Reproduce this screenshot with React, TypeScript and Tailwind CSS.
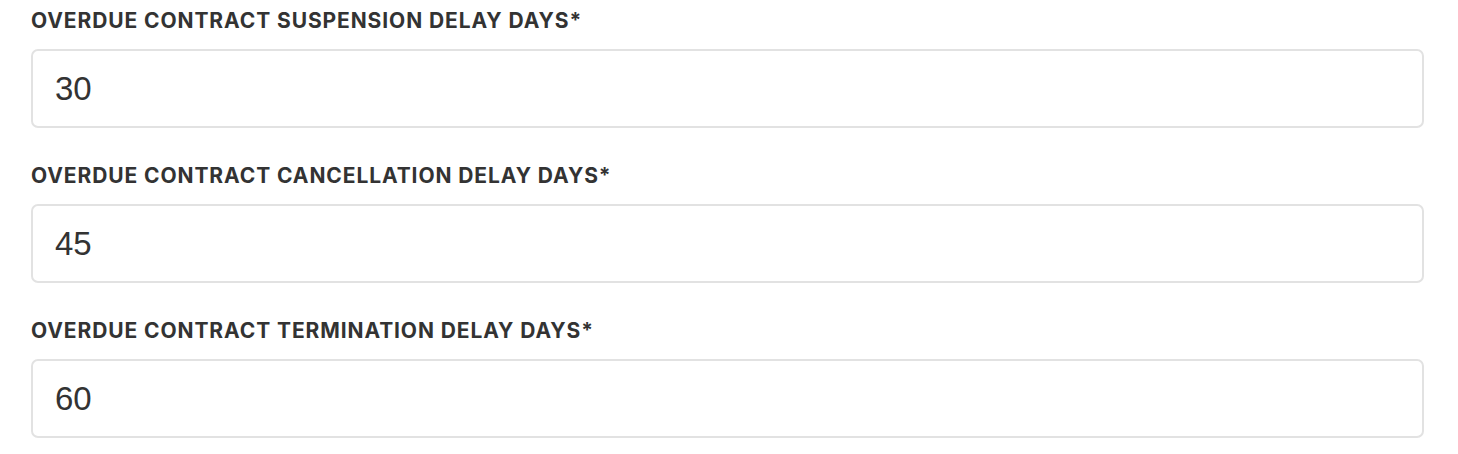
const fields = [
  { id: 'suspension', label: 'OVERDUE CONTRACT SUSPENSION DELAY DAYS*', value: '30' },
  { id: 'cancellation', label: 'OVERDUE CONTRACT CANCELLATION DELAY DAYS*', value: '45' },
  { id: 'termination', label: 'OVERDUE CONTRACT TERMINATION DELAY DAYS*', value: '60' },
]

export default function App() {
  return (
    <div className="min-h-screen bg-white pl-[31px] pr-[34px] pt-[7px]">
      <div className="flex flex-col gap-[34px]">
        {fields.map((f) => (
          <div key={f.id} className="flex flex-col gap-[14px]">
            <label
              htmlFor={f.id}
              className="text-[21px] leading-[28px] font-bold tracking-[0.9px] text-[#333333] [font-family:Inter,sans-serif]"
            >
              {f.label}
            </label>
            <input
              id={f.id}
              type="text"
              defaultValue={f.value}
              className="h-[79px] w-full rounded-[7px] border-2 border-[#e2e2e2] bg-white px-[22px] text-[33px] text-[#333333] outline-none [font-family:'Liberation_Sans',Arial,sans-serif]"
            />
          </div>
        ))}
      </div>
    </div>
  )
}
